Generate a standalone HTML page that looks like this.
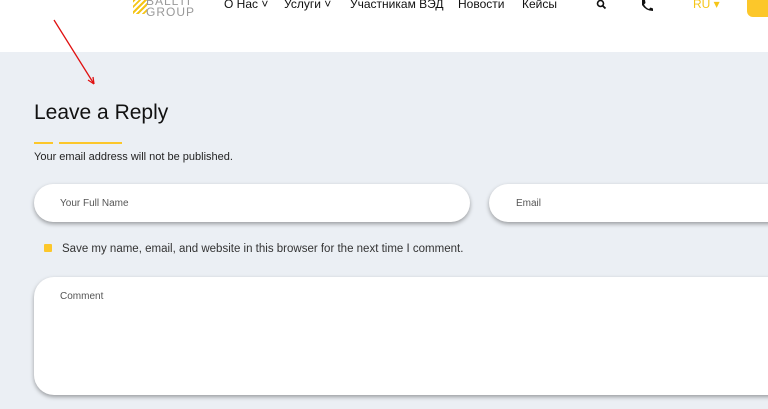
<!DOCTYPE html>
<html><head><meta charset="utf-8"><style>
body{margin:0;width:768px;height:409px;overflow:hidden;font-family:"Liberation Sans","DejaVu Sans",sans-serif;background:#ebeff4;position:relative}
.hdr{position:absolute;left:0;top:0;width:768px;height:52px;background:#fff}
.nav{position:absolute;top:-3px;font-size:12px;color:#111}
.inp{position:absolute;background:#fff;border-radius:20px;box-shadow:0 2px 4px rgba(0,0,0,.35);font-size:10px;color:#555}
</style></head><body>
<div class="hdr">
<div style="position:absolute;left:133px;top:0;width:14px;height:14px;background:repeating-linear-gradient(135deg,#f5c518 0 2px,transparent 2px 4px)"></div>
<div style="position:absolute;left:146px;top:-4px;font-size:12px;color:#999;line-height:11px;letter-spacing:1px">BALLTI<br>GROUP</div>
<div class="nav" style="left:224px">О Нас ˅</div>
<div class="nav" style="left:284px">Услуги ˅</div>
<div class="nav" style="left:350px">Участникам ВЭД</div>
<div class="nav" style="left:458px">Новости</div>
<div class="nav" style="left:522px">Кейсы</div>
<svg style="position:absolute;left:596px;top:0" width="12" height="10"><circle cx="4.5" cy="3.5" r="3" fill="none" stroke="#111" stroke-width="1.6"/><line x1="6.7" y1="5.7" x2="9.5" y2="8.5" stroke="#111" stroke-width="1.8"/></svg>
<svg style="position:absolute;left:640px;top:0" width="14" height="12"><path d="M2 0 L5 0 L5.5 3 L4 4.5 Q6 8 9 9 L10.5 7.5 L13 8.5 L13 11 Q6 11 2 5 Z" fill="#111"/></svg>
<div class="nav" style="left:693px;color:#f5c518">RU ▾</div>
<div style="position:absolute;left:747px;top:-10px;width:30px;height:27px;background:#fcc72a;border-radius:6px"></div>
</div>
<svg style="position:absolute;left:0;top:0" width="120" height="100"><line x1="54" y1="20" x2="94" y2="84" stroke="#e01010" stroke-width="1.3"/><path d="M94 84 L88 80 M94 84 L93 77" stroke="#e01010" stroke-width="1.3"/></svg>
<div style="position:absolute;left:34px;top:101px;font-size:21px;color:#111">Leave a Reply</div>
<div style="position:absolute;left:34px;top:142px;width:19px;height:2px;background:#fcc72a"></div>
<div style="position:absolute;left:59px;top:142px;width:63px;height:2px;background:#fcc72a"></div>
<div style="position:absolute;left:34px;top:151px;font-size:11px;color:#222">Your email address will not be published.</div>
<div class="inp" style="left:34px;top:184px;width:436px;height:38px"><span style="position:absolute;left:26px;top:14px">Your Full Name</span></div>
<div class="inp" style="left:489px;top:184px;width:300px;height:38px"><span style="position:absolute;left:27px;top:14px">Email</span></div>
<div style="position:absolute;left:44px;top:244px;width:8px;height:8px;background:#fcc72a;border-radius:1px"></div>
<div style="position:absolute;left:62px;top:243px;font-size:11.5px;color:#333">Save my name, email, and website in this browser for the next time I comment.</div>
<div class="inp" style="left:34px;top:277px;width:760px;height:118px"><span style="position:absolute;left:26px;top:14px">Comment</span></div>
</body></html>
